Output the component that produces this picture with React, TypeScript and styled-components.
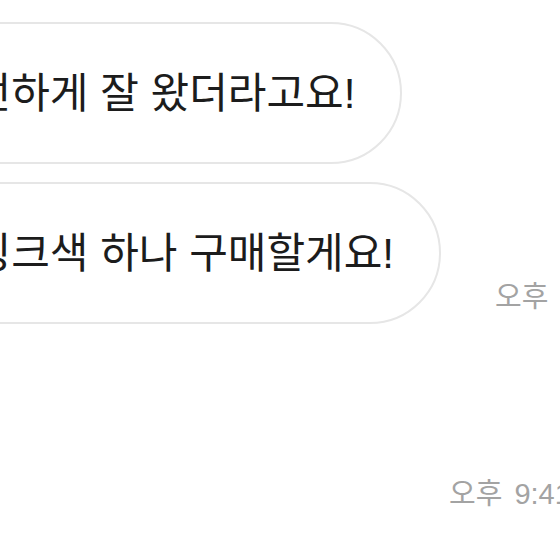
import styled, { createGlobalStyle } from "styled-components";

const GlobalStyle = createGlobalStyle`
  html, body {
    margin: 0;
    padding: 0;
    background: #ffffff;
    font-family: "Liberation Sans", "Noto Sans CJK KR", sans-serif;
  }
`;

type TMessage = {
  id: number;
  text: string;
  time?: string;
};

const received: TMessage[] = [
  { id: 1, text: "택배 안전하게 잘 왔더라고요!" },
  { id: 2, text: "저희도 핑크색 하나 구매할게요!", time: "오후 9:41" },
];

const App = () => {
  return (
    <>
      <GlobalStyle />
      <PageStyle>
        <ListStyle>
          <GroupStyle>
            {received.map((msg) => (
              <ReceivedRowStyle key={msg.id}>
                <BubbleStyle>{msg.text}</BubbleStyle>
                {msg.time && <TimeStyle $side="left">{msg.time}</TimeStyle>}
              </ReceivedRowStyle>
            ))}
          </GroupStyle>
          <SentRowStyle>
            <TimeStyle $side="right">오후 9:41</TimeStyle>
            <BubbleStyle>네 감사합니다!</BubbleStyle>
          </SentRowStyle>
        </ListStyle>
      </PageStyle>
    </>
  );
};

export default App;

const PageStyle = styled.div`
  width: 560px;
  height: 560px;
  overflow: hidden;
  background: #ffffff;
`;

const ListStyle = styled.div`
  display: flex;
  flex-direction: column;
  padding-top: 22px;
  gap: 55px;
`;

const GroupStyle = styled.div`
  display: flex;
  flex-direction: column;
  gap: 18px;
`;

const ReceivedRowStyle = styled.div`
  display: flex;
  align-items: flex-end;
  margin-left: -197px;
`;

const SentRowStyle = styled.div`
  display: flex;
  align-items: flex-end;
  margin-left: 449px;
`;

const BubbleStyle = styled.div`
  flex-shrink: 0;
  box-sizing: border-box;
  height: 142px;
  padding: 0 45px 8px 40px;
  display: flex;
  align-items: center;
  border: 2px solid #e6e6e6;
  border-radius: 71px;
  background: #ffffff;
  color: #1c1c1c;
  font-family: "Liberation Sans", "Noto Sans CJK KR", sans-serif;
  font-size: 42px;
  white-space: nowrap;
`;

const TimeStyle = styled.span<{ $side: "left" | "right" }>`
  flex-shrink: 0;
  margin: ${({ $side }) =>
    $side === "left" ? "0 0 10px 54px" : "0 52px 10px 0"};
  color: #a3a3a3;
  font-family: "Liberation Sans", "Noto Sans CJK KR", sans-serif;
  font-size: 29px;
  line-height: 34px;
  word-spacing: 4px;
  white-space: nowrap;
`;
